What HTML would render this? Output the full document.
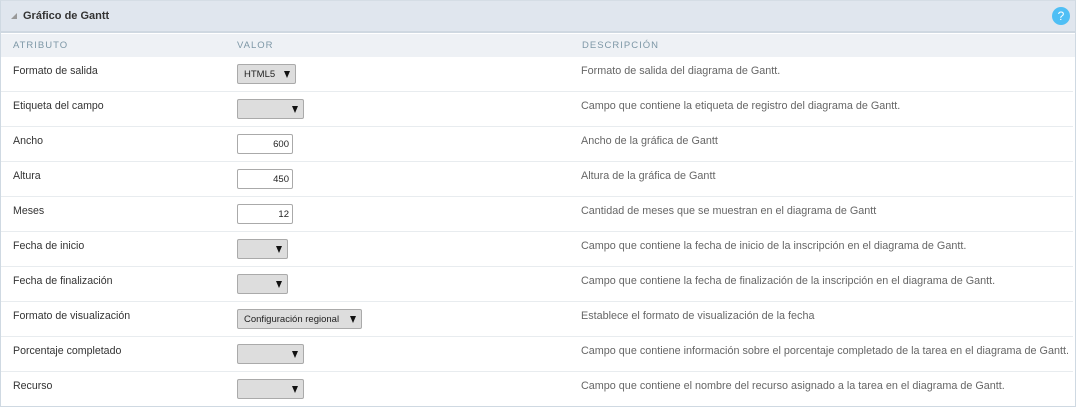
<!DOCTYPE html>
<html><head><meta charset="utf-8"><style>
*{margin:0;padding:0;box-sizing:border-box}
body{width:1077px;height:407px;background:#fff;font-family:"Liberation Sans",sans-serif;position:relative;overflow:hidden}
.frame{position:absolute;left:0;top:0;width:1076px;height:407px;border:1px solid #cfd9e2;border-top:1px solid #d5dde5}
.hdr{position:absolute;left:1px;top:1px;width:1074px;height:32px;background:#e0e6ee;border-bottom:2px solid #cfd8e1}
.hdr .t{position:absolute;left:22px;top:9px;font-size:11px;font-weight:bold;color:#333}
.hdr .tri{position:absolute;left:10px;top:12px;width:0;height:0;border-left:6px solid transparent;border-bottom:6px solid #999}
.help{position:absolute;width:18px;height:18px;border-radius:50%;background:#4fbff5;color:#fff;font-size:12px;text-align:center;line-height:18px}
.ch{position:absolute;left:1px;top:34px;width:1074px;height:23px;background:#eef1f5}
.ch span{position:absolute;top:6px;font-size:9.5px;letter-spacing:1px;color:#7d97a6}
.row{position:absolute;left:1px;width:1072px;height:35px;border-bottom:1px solid #e8ecef}
.row .a{position:absolute;left:12px;top:8px;font-size:10.6px;color:#333}
.row .d{position:absolute;left:580px;top:8px;font-size:10.8px;color:#666}
.sel{position:absolute;left:236px;top:7px;height:20px;background:#ddd;border:1px solid #aaa;border-radius:2px;font-size:9.5px;color:#222;padding:4px 0 0 6px}
.sel:after{content:"";position:absolute;right:5px;top:6px;border-left:3.5px solid transparent;border-right:3.5px solid transparent;border-top:7px solid #111}
.inp{position:absolute;left:236px;top:7px;width:56px;height:20px;border:1px solid #aaa;border-radius:2px;font-size:9.5px;color:#222;text-align:right;padding:4px 3px 0 0;background:#fff}
</style></head><body>
<div class="frame"></div>
<div class="hdr"><div class="tri"></div><div class="t">Gráfico de Gantt</div><div class="help" style="left:1051px;top:6px">?</div></div>
<div class="ch"><span style="left:12px">ATRIBUTO</span><span style="left:236px">VALOR</span><span style="left:581px">DESCRIPCIÓN</span></div>

<div class="row" style="top:57px"><div class="a">Formato de salida</div><div class="sel" style="width:59px">HTML5</div><div class="d">Formato de salida del diagrama de Gantt.</div></div>
<div class="row" style="top:92px"><div class="a">Etiqueta del campo</div><div class="sel" style="width:67px"></div><div class="d">Campo que contiene la etiqueta de registro del diagrama de Gantt.</div></div>
<div class="row" style="top:127px"><div class="a">Ancho</div><div class="inp">600</div><div class="d">Ancho de la gráfica de Gantt</div></div>
<div class="row" style="top:162px"><div class="a">Altura</div><div class="inp">450</div><div class="d">Altura de la gráfica de Gantt</div></div>
<div class="row" style="top:197px"><div class="a">Meses</div><div class="inp">12</div><div class="d">Cantidad de meses que se muestran en el diagrama de Gantt</div></div>
<div class="row" style="top:232px"><div class="a">Fecha de inicio</div><div class="sel" style="width:51px"></div><div class="d">Campo que contiene la fecha de inicio de la inscripción en el diagrama de Gantt.</div></div>
<div class="row" style="top:267px"><div class="a">Fecha de finalización</div><div class="sel" style="width:51px"></div><div class="d">Campo que contiene la fecha de finalización de la inscripción en el diagrama de Gantt.</div></div>
<div class="row" style="top:302px"><div class="a">Formato de visualización</div><div class="sel" style="width:125px">Configuración regional</div><div class="d">Establece el formato de visualización de la fecha</div></div>
<div class="row" style="top:337px"><div class="a">Porcentaje completado</div><div class="sel" style="width:67px"></div><div class="d">Campo que contiene información sobre el porcentaje completado de la tarea en el diagrama de Gantt.</div></div>
<div class="row" style="top:372px;border-bottom:none"><div class="a">Recurso</div><div class="sel" style="width:67px"></div><div class="d">Campo que contiene el nombre del recurso asignado a la tarea en el diagrama de Gantt.</div></div>
</body></html>
